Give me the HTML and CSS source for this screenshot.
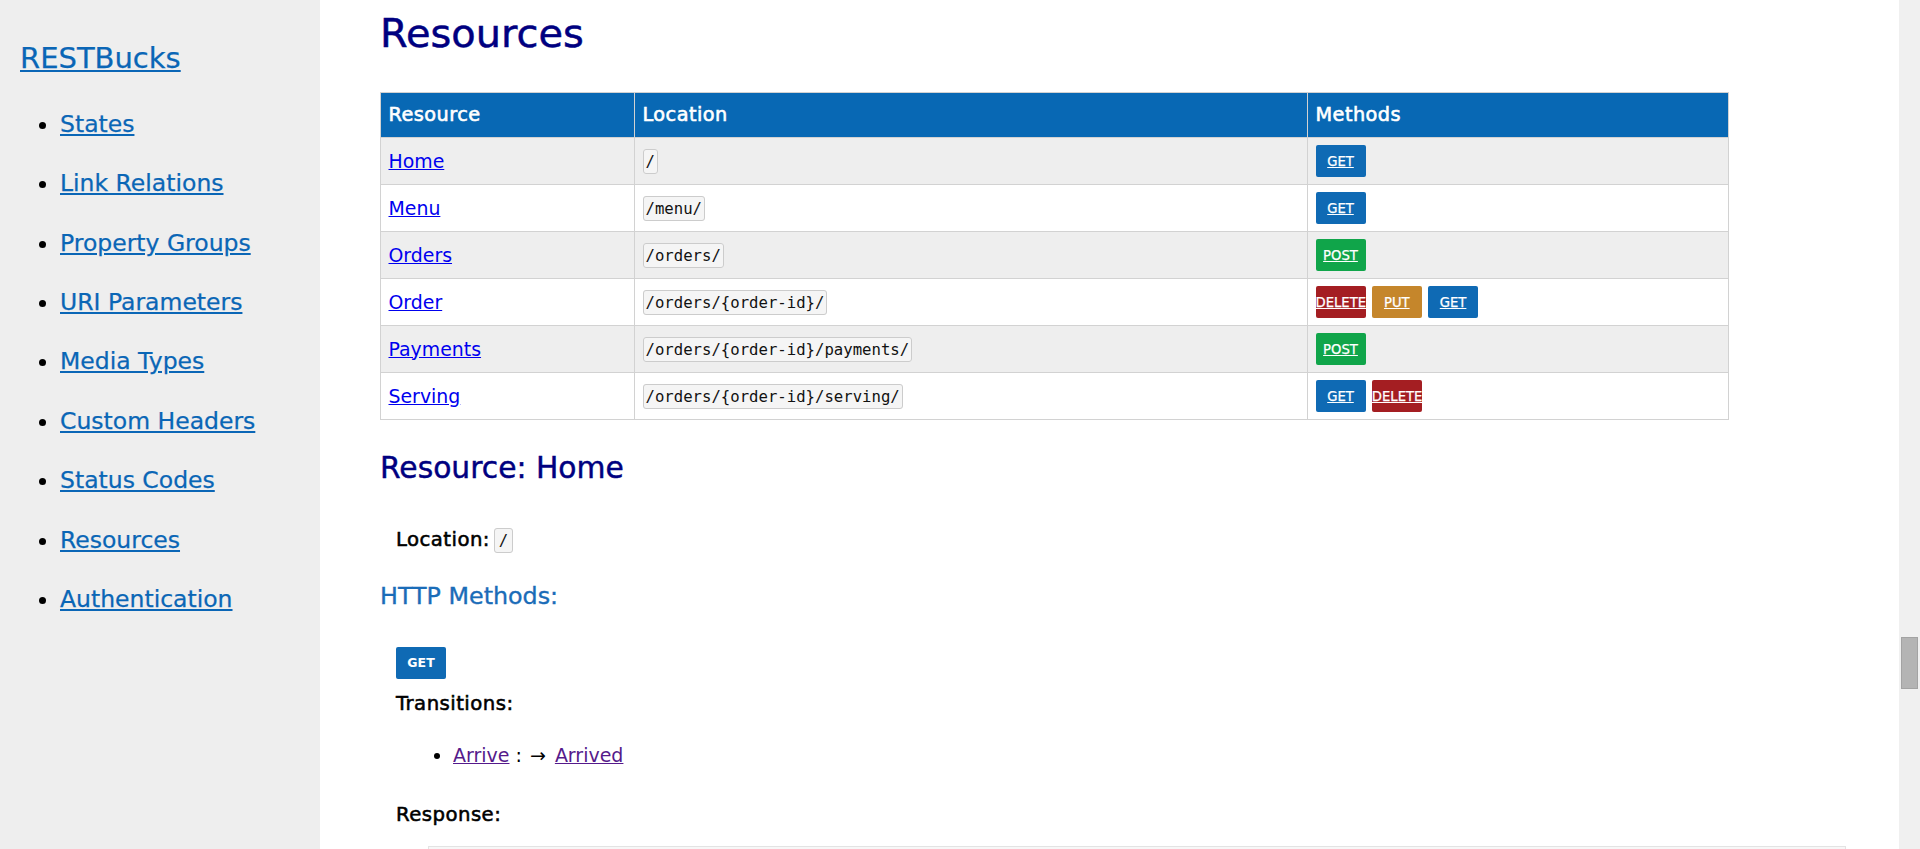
FILE: index.html
```html
<!DOCTYPE html>
<html lang="en">
<head>
<meta charset="utf-8">
<title>RESTBucks - Resources</title>
<link rel="stylesheet" href="styles.css">
</head>
<body>
<nav class="sidebar">
  <h2 class="brand"><a href="#">RESTBucks</a></h2>
  <ul class="toc">
    <li><a href="#">States</a></li>
    <li><a href="#">Link Relations</a></li>
    <li><a href="#">Property Groups</a></li>
    <li><a href="#">URI Parameters</a></li>
    <li><a href="#">Media Types</a></li>
    <li><a href="#">Custom Headers</a></li>
    <li><a href="#">Status Codes</a></li>
    <li><a href="#">Resources</a></li>
    <li><a href="#">Authentication</a></li>
  </ul>
</nav>
<main class="main">
  <h1 class="title">Resources</h1>
  <table class="res-table">
    <colgroup>
      <col class="c1"><col class="c2"><col class="c3">
    </colgroup>
    <thead>
      <tr><th>Resource</th><th>Location</th><th>Methods</th></tr>
    </thead>
    <tbody>
      <tr>
        <td><a href="#">Home</a></td>
        <td><code>/</code></td>
        <td><div class="methods"><a class="m get" href="#">GET</a></div></td>
      </tr>
      <tr>
        <td><a href="#">Menu</a></td>
        <td><code>/menu/</code></td>
        <td><div class="methods"><a class="m get" href="#">GET</a></div></td>
      </tr>
      <tr>
        <td><a href="#">Orders</a></td>
        <td><code>/orders/</code></td>
        <td><div class="methods"><a class="m post" href="#">POST</a></div></td>
      </tr>
      <tr>
        <td><a href="#">Order</a></td>
        <td><code>/orders/{order-id}/</code></td>
        <td><div class="methods"><a class="m delete" href="#">DELETE</a><a class="m put" href="#">PUT</a><a class="m get" href="#">GET</a></div></td>
      </tr>
      <tr>
        <td><a href="#">Payments</a></td>
        <td><code>/orders/{order-id}/payments/</code></td>
        <td><div class="methods"><a class="m post" href="#">POST</a></div></td>
      </tr>
      <tr>
        <td><a href="#">Serving</a></td>
        <td><code>/orders/{order-id}/serving/</code></td>
        <td><div class="methods"><a class="m get" href="#">GET</a><a class="m delete" href="#">DELETE</a></div></td>
      </tr>
    </tbody>
  </table>

  <h2 class="res-title">Resource: Home</h2>
  <p class="label loc"><b>Location:</b> <code class="loc-code">/</code></p>
  <h3 class="sub">HTTP Methods:</h3>
  <div class="indent">
    <div class="verb">GET</div>
    <p class="label trans"><b>Transitions:</b></p>
    <ul class="trans-list">
      <li><a class="visited" href="#">Arrive</a> :<span class="arrow">→</span><a class="visited" href="#">Arrived</a></li>
    </ul>
    <p class="label resp"><b>Response:</b></p>
    <div class="pre"></div>
  </div>
</main>
<div class="scrollbar"><div class="thumb"></div></div>
</body>
</html>
```

FILE: styles.css
```css
html, body {
  margin: 0;
  padding: 0;
}
body {
  height: 849px;
  overflow: hidden;
  display: flex;
  background: #ffffff;
  font-family: "DejaVu Sans", "Liberation Sans", sans-serif;
  color: #000;
}

/* Sidebar */
.sidebar {
  width: 320px;
  flex: 0 0 320px;
  background: #eeeeee;
  padding: 0 0 0 20px;
  box-sizing: border-box;
}
.sidebar a {
  color: #0a66b6;
  -webkit-text-stroke: 0.25px #0a66b6;
}
.brand {
  margin: 41px 0 0 0;
  font-size: 29px;
  line-height: 34px;
  font-weight: normal;
}
.toc {
  margin: 35.8px 0 0 0;
  padding-left: 40px;
  font-size: 23.5px;
  line-height: 27px;
}
.toc li {
  margin-bottom: 32.4px;
}

/* Main */
.main {
  flex: 1 1 auto;
  min-width: 0;
  padding: 10.5px 0 0 60px;
  overflow: hidden;
}
.title {
  margin: 0;
  font-size: 39.9px;
  line-height: 45px;
  font-weight: normal;
  color: #000080;
  -webkit-text-stroke: 0.5px #000080;
}

.res-table {
  margin-top: 36.5px;
  width: 1348px;
  border-collapse: collapse;
  table-layout: fixed;
  font-size: 18.9px;
  line-height: 23px;
}
.res-table .c1 { width: 254px; }
.res-table .c2 { width: 673px; }
.res-table .c3 { width: 421px; }
.res-table th,
.res-table td {
  border: 1px solid #d2d2d2;
  text-align: left;
  vertical-align: middle;
  padding: 7px 7.5px;
}
.res-table th {
  background: #0868b4;
  color: #ffffff;
  font-size: 19.3px;
  font-weight: normal;
  letter-spacing: 0.45px;
  padding-top: 10px;
  padding-bottom: 11px;
  -webkit-text-stroke: 0.6px #ffffff;
}
.res-table tbody tr:nth-child(odd) td {
  background: #eeeeee;
}
.res-table td a {
  color: #0000ee;
}

code {
  font-family: "DejaVu Sans Mono", "Liberation Mono", monospace;
  font-size: 15.65px;
  background: #f5f5f5;
  border: 1px solid #cccccc;
  border-radius: 3px;
  padding: 2px 2px;
  color: #111;
}
.loc-code {
  padding: 2px 3.5px;
  margin-left: -2px;
}

.methods {
  display: flex;
  gap: 6.3px;
}
.m {
  display: block;
  width: 50px;
  height: 32px;
  line-height: 32px;
  padding-top: 1px;
  box-sizing: border-box;
  border-radius: 2px;
  text-align: center;
  white-space: nowrap;
  font-size: 13.2px;
  color: #ffffff !important;
  text-decoration: underline;
  -webkit-text-stroke: 0.25px #ffffff;
}
.get { background: #0f6ab4; }
.post { background: #10a54a; }
.put { background: #c5862b; }
.delete { background: #a41e22; }

.res-title {
  margin: 31.2px 0 0 0;
  font-size: 29.75px;
  line-height: 34px;
  font-weight: normal;
  color: #000080;
  -webkit-text-stroke: 0.45px #000080;
}

.label {
  font-size: 19.7px;
  line-height: 23px;
  margin: 0;
}
.label b {
  font-weight: normal;
  letter-spacing: 0.45px;
  -webkit-text-stroke: 0.55px #000;
}
.loc {
  margin: 43px 0 0 16px;
}
.sub {
  margin: 29.8px 0 0 0;
  font-size: 23.8px;
  line-height: 28px;
  font-weight: normal;
  color: #1a6cb8;
  -webkit-text-stroke: 0.35px #1a6cb8;
}
.indent {
  padding-left: 16px;
}
.verb {
  margin-top: 37.5px;
  width: 50px;
  height: 32px;
  line-height: 32px;
  border-radius: 2px;
  background: #0f6ab4;
  color: #ffffff;
  font-size: 12.5px;
  font-weight: bold;
  text-align: center;
}
.trans {
  margin-top: 13px;
}
.trans-list {
  margin: 28.3px 0 0 0;
  padding-left: 57px;
  font-size: 19px;
  line-height: 23px;
}
.arrow {
  margin: 0 9px 0 8px;
}
.visited {
  color: #551a8b;
}
.resp {
  margin-top: 36.7px;
}
.pre {
  margin: 19.3px 0 0 32px;
  width: 1416px;
  height: 120px;
  background: #f7f7f7;
  border: 1px solid #e3e3e3;
}

/* Scrollbar */
.scrollbar {
  flex: 0 0 21px;
  width: 21px;
  background: #f0f0f0;
}
.thumb {
  margin: 637px 0 0 2px;
  width: 17px;
  height: 52px;
  box-sizing: border-box;
  background: #b4b4b4;
  border: 1px solid #a3a3a3;
}
```
